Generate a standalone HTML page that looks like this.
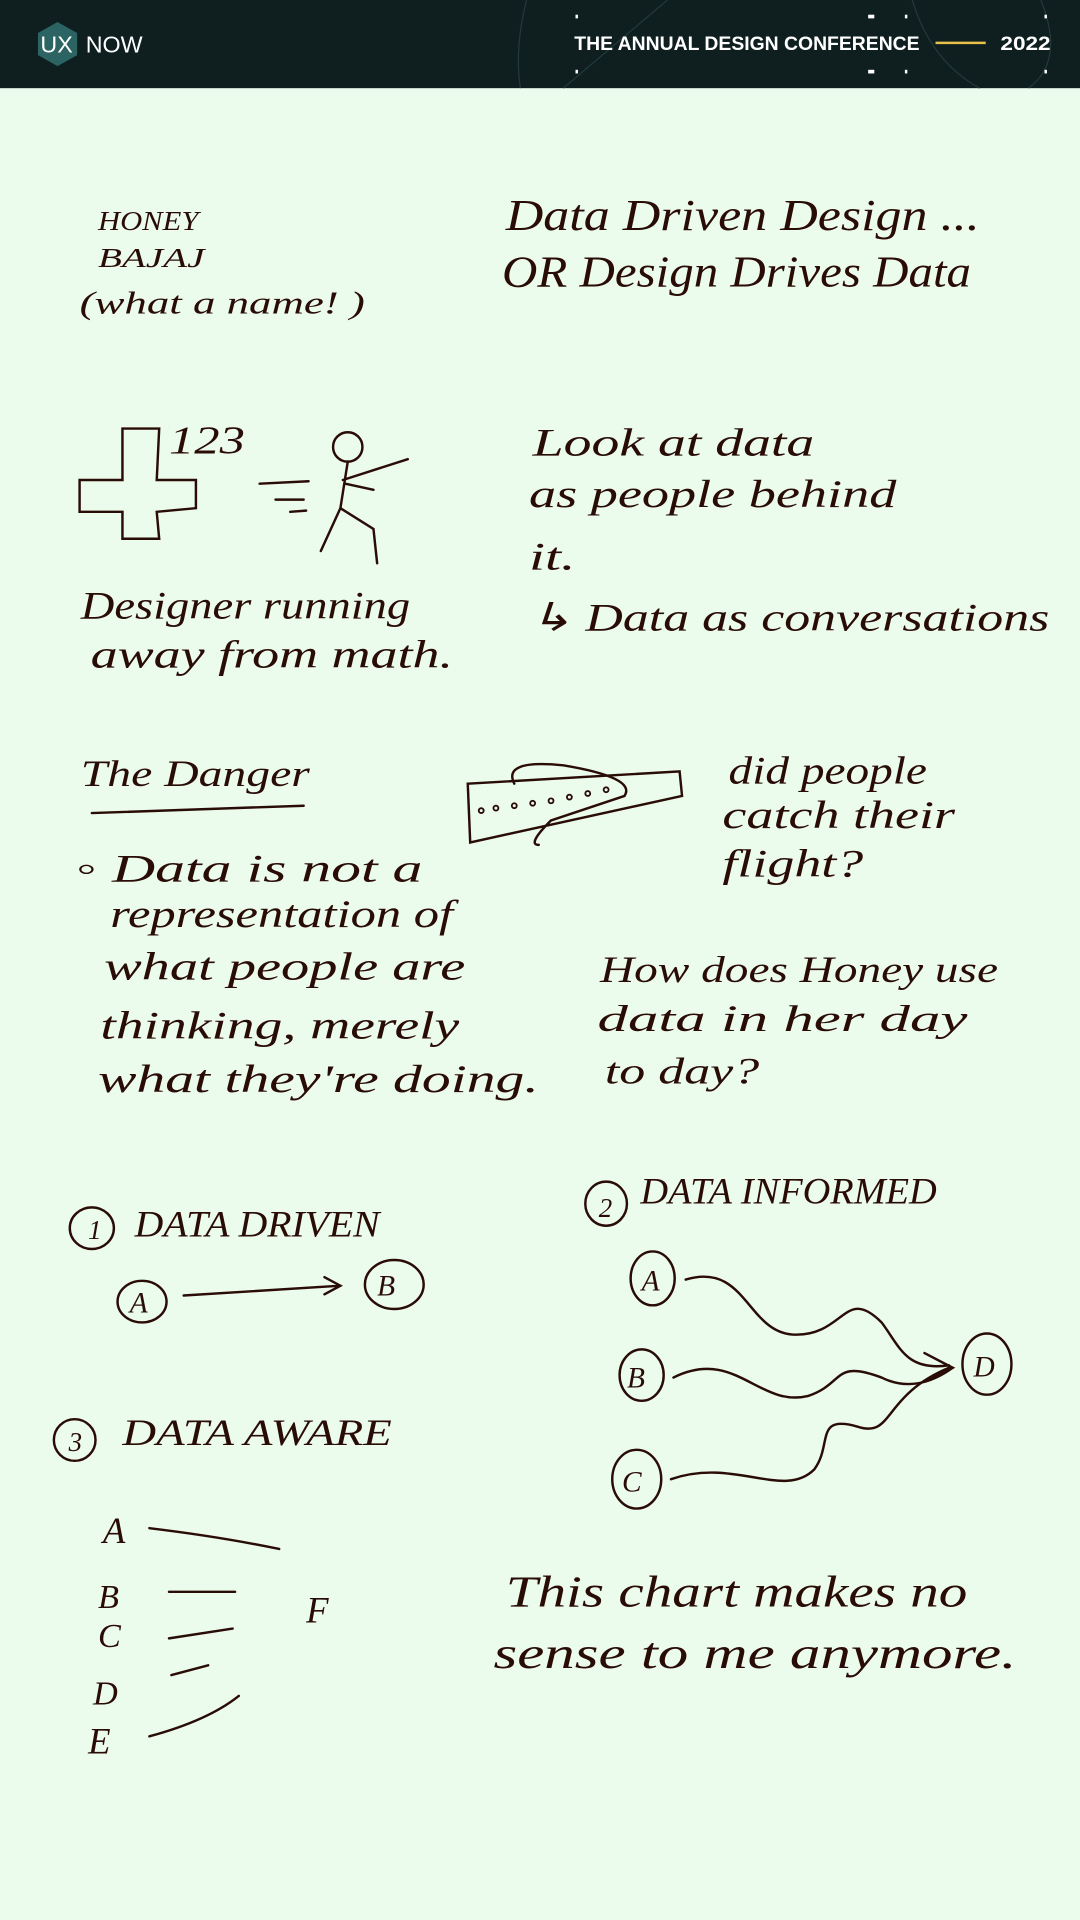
<!DOCTYPE html>
<html><head><meta charset="utf-8"><style>
html,body{margin:0;padding:0;background:#ebfbec;}
svg{display:block}
.h{font-family:"Liberation Serif",serif;font-style:italic;fill:#2a0c07;}
</style></head><body>
<svg width="1080" height="1920" viewBox="0 0 882 1568" xmlns="http://www.w3.org/2000/svg">
<rect width="882" height="1568" fill="#ebfbec"/>
<rect width="882" height="72" fill="#0f1f20"/>
<path d="M430 0 Q420 40 425 72 M460 72 L545 0 M745 0 Q760 50 800 72 M850 0 Q870 50 840 72" stroke="#24393a" stroke-width="1" fill="none"/>
<polygon points="47,18 63,27 63,45 47,54 31,45 31,27" fill="#2b6462"/>
<text x="33" y="43" font-family="Liberation Sans,sans-serif" font-size="19" fill="#fff" font-weight="300">UX</text>
<text x="70" y="43" font-family="Liberation Sans,sans-serif" font-size="19" fill="#fff">NOW</text>
<text x="469" y="41" font-family="Liberation Sans,sans-serif" font-size="15.5" font-weight="bold" fill="#fff" textLength="282" lengthAdjust="spacingAndGlyphs">THE ANNUAL DESIGN CONFERENCE</text>
<line x1="764" y1="35" x2="805" y2="35" stroke="#e8c14a" stroke-width="2"/>
<text x="817" y="41" font-family="Liberation Sans,sans-serif" font-size="15.5" font-weight="bold" fill="#fff" textLength="41" lengthAdjust="spacingAndGlyphs">2022</text>
<g fill="#fff"><rect x="470" y="12" width="2" height="3"/><rect x="470" y="57" width="2" height="3"/><rect x="709" y="12" width="5" height="3"/><rect x="709" y="57" width="5" height="3"/><rect x="739" y="12" width="2" height="3"/><rect x="739" y="57" width="2" height="3"/><rect x="853" y="12" width="2" height="3"/><rect x="853" y="57" width="2" height="3"/></g>

<g class="h">
<text lengthAdjust="spacingAndGlyphs" x="80" y="188" font-size="22" textLength="82">HONEY</text>
<text lengthAdjust="spacingAndGlyphs" x="80" y="218" font-size="22" textLength="87">BAJAJ</text>
<text lengthAdjust="spacingAndGlyphs" x="65" y="256" font-size="26" textLength="233">(what a name! )</text>
<text lengthAdjust="spacingAndGlyphs" x="413" y="188" font-size="36" textLength="387">Data Driven Design ...</text>
<text lengthAdjust="spacingAndGlyphs" x="410" y="234" font-size="36" textLength="383">OR Design Drives Data</text>

<text lengthAdjust="spacingAndGlyphs" x="138" y="370" font-size="32" textLength="62">123</text>
<text lengthAdjust="spacingAndGlyphs" x="435" y="372" font-size="32" textLength="230">Look at data</text>
<text lengthAdjust="spacingAndGlyphs" x="432" y="414" font-size="32" textLength="300">as people behind</text>
<text lengthAdjust="spacingAndGlyphs" x="432" y="465" font-size="32" textLength="38">it.</text>
<text lengthAdjust="spacingAndGlyphs" x="432" y="515" font-size="32" textLength="425">↳ Data as conversations</text>
<text lengthAdjust="spacingAndGlyphs" x="66" y="505" font-size="32" textLength="269">Designer running</text>
<text lengthAdjust="spacingAndGlyphs" x="74" y="545" font-size="32" textLength="296">away from math.</text>

<text lengthAdjust="spacingAndGlyphs" x="66" y="642" font-size="30" textLength="187">The Danger</text>
<text lengthAdjust="spacingAndGlyphs" x="595" y="640" font-size="32" textLength="162">did people</text>
<text lengthAdjust="spacingAndGlyphs" x="590" y="676" font-size="32" textLength="190">catch their</text>
<text lengthAdjust="spacingAndGlyphs" x="590" y="716" font-size="32" textLength="115">flight?</text>
<text lengthAdjust="spacingAndGlyphs" x="62" y="720" font-size="32" textLength="283">◦ Data is not a</text>
<text lengthAdjust="spacingAndGlyphs" x="90" y="757" font-size="32" textLength="280">representation of</text>
<text lengthAdjust="spacingAndGlyphs" x="85" y="800" font-size="32" textLength="295">what people are</text>
<text lengthAdjust="spacingAndGlyphs" x="82" y="848" font-size="32" textLength="293">thinking, merely</text>
<text lengthAdjust="spacingAndGlyphs" x="80" y="892" font-size="32" textLength="360">what they're doing.</text>
<text lengthAdjust="spacingAndGlyphs" x="490" y="802" font-size="30" textLength="325">How does Honey use</text>
<text lengthAdjust="spacingAndGlyphs" x="488" y="842" font-size="30" textLength="302">data in her day</text>
<text lengthAdjust="spacingAndGlyphs" x="494" y="885" font-size="30" textLength="126">to day?</text>

<text lengthAdjust="spacingAndGlyphs" x="110" y="1010" font-size="30" textLength="200">DATA DRIVEN</text>
<text lengthAdjust="spacingAndGlyphs" x="523" y="983" font-size="30" textLength="242">DATA INFORMED</text>
<text lengthAdjust="spacingAndGlyphs" x="100" y="1180" font-size="30" textLength="220">DATA AWARE</text>
<text x="72" y="1012" font-size="22">1</text>
<text x="489" y="994" font-size="22">2</text>
<text x="56" y="1185" font-size="22">3</text>
<text x="106" y="1072" font-size="24">A</text>
<text x="308" y="1058" font-size="24">B</text>
<text x="524" y="1054" font-size="24">A</text>
<text x="512" y="1133" font-size="24">B</text>
<text x="508" y="1218" font-size="24">C</text>
<text x="795" y="1124" font-size="24">D</text>

<text x="84" y="1260" font-size="30">A</text>
<text x="80" y="1313" font-size="28">B</text>
<text x="80" y="1345" font-size="28">C</text>
<text x="76" y="1392" font-size="28">D</text>
<text x="72" y="1432" font-size="30">E</text>
<text x="250" y="1325" font-size="30">F</text>
<text lengthAdjust="spacingAndGlyphs" x="413" y="1312" font-size="36" textLength="377">This chart makes no</text>
<text lengthAdjust="spacingAndGlyphs" x="403" y="1362" font-size="36" textLength="427">sense to me anymore.</text>
</g>

<g stroke="#2a0c07" stroke-width="2" fill="none" stroke-linecap="round">
<path d="M100 350 L130 350 L128 392 L160 392 L160 415 L128 418 L130 440 L100 440 L100 418 L65 418 L65 392 L100 392 Z"/>
<circle cx="284" cy="365" r="12"/>
<path d="M284 377 L278 415 L262 450 M278 415 L305 432 L308 460 M280 392 L333 375 M282 395 L305 400 M212 395 L252 393 M225 408 L248 408 M237 418 L250 417"/>
<path d="M75 664 L248 658"/>
<path d="M382 640 L555 630 L557 650 L384 688 Z M420 640 Q410 620 460 625 Q520 635 510 650 L450 670 Q430 690 440 690"/>
<g stroke-width="1.5"><circle cx="393" cy="662" r="2"/><circle cx="405" cy="660" r="2"/><circle cx="420" cy="658" r="2"/><circle cx="435" cy="656" r="2"/><circle cx="450" cy="654" r="2"/><circle cx="465" cy="651" r="2"/><circle cx="480" cy="648" r="2"/><circle cx="495" cy="645" r="2"/></g>
<ellipse cx="75" cy="1003" rx="18" ry="17"/>
<ellipse cx="495" cy="983" rx="17" ry="18"/>
<ellipse cx="61" cy="1176" rx="17" ry="17"/>
<ellipse cx="116" cy="1063" rx="20" ry="17"/>
<ellipse cx="322" cy="1049" rx="24" ry="20"/>
<path d="M150 1058 L278 1050 M265 1043 L278 1050 L265 1057"/>
<ellipse cx="533" cy="1044" rx="18" ry="22"/>
<ellipse cx="524" cy="1123" rx="18" ry="21"/>
<ellipse cx="520" cy="1208" rx="20" ry="24"/>
<ellipse cx="806" cy="1114" rx="20" ry="25"/>
<path d="M560 1045 C610 1030 610 1090 650 1090 C690 1090 690 1050 720 1080 C735 1100 740 1120 775 1115"/>
<path d="M550 1125 C600 1100 620 1150 660 1140 C690 1130 680 1110 720 1125 C740 1135 760 1130 778 1117"/>
<path d="M548 1208 C600 1190 640 1225 665 1200 C680 1180 665 1155 700 1165 C730 1175 720 1140 775 1117"/>
<path d="M755 1105 L778 1117 L755 1128"/>
<path d="M122 1248 Q180 1255 228 1265 M138 1300 L192 1300 M138 1338 L190 1330 M140 1368 L170 1360 M122 1418 Q170 1405 195 1385"/>
</g>
</svg>
</body></html>
